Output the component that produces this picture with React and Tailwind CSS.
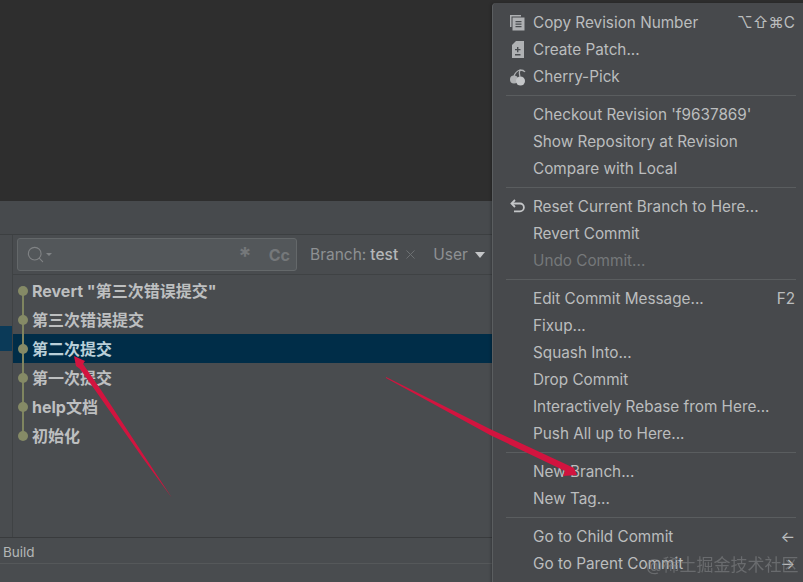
import { Search, X } from "lucide-react";

const font = "font-['Inter','Noto_Sans_CJK_SC',sans-serif]";

const commits = [
  { text: 'Revert "第三次错误提交"' },
  { text: "第三次错误提交" },
  { text: "第二次提交", selected: true },
  { text: "第一次提交" },
  { text: "help文档" },
  { text: "初始化" },
];

const menuGroups = [
  [
    { label: "Copy Revision Number", icon: "copy", hint: "⌥⇧⌘C" },
    { label: "Create Patch...", icon: "patch" },
    { label: "Cherry-Pick", icon: "cherry" },
  ],
  [
    { label: "Checkout Revision 'f9637869'" },
    { label: "Show Repository at Revision" },
    { label: "Compare with Local" },
  ],
  [
    { label: "Reset Current Branch to Here...", icon: "reset" },
    { label: "Revert Commit" },
    { label: "Undo Commit...", disabled: true },
  ],
  [
    { label: "Edit Commit Message...", hint: "F2" },
    { label: "Fixup..." },
    { label: "Squash Into..." },
    { label: "Drop Commit" },
    { label: "Interactively Rebase from Here..." },
    { label: "Push All up to Here..." },
  ],
  [{ label: "New Branch..." }, { label: "New Tag..." }],
  [
    { label: "Go to Child Commit", hint: "←" },
    { label: "Go to Parent Commit", hint: "→" },
  ],
];

function MenuIcon({ name }) {
  if (name === "copy") {
    return (
      <svg width="18" height="18" viewBox="0 0 18 18">
        <path d="M1 1h11v1.500H2.500V13H1z" fill="#afb1b3" />
        <path d="M3.500 3.500h12v13h-12z" fill="#afb1b3" />
        <path d="M6.500 7h6v1.300h-6zM6.500 9.500h6v1.300h-6zM6.500 12h6v1.300h-6z" fill="#4a4d50" />
      </svg>
    );
  }
  if (name === "patch") {
    return (
      <svg width="18" height="18" viewBox="0 0 18 18">
        <path d="M7 0h8v17H3V4z" fill="#afb1b3" />
        <path d="M8 6h1.400v2H11.500v1.300H9.400v2H8v-2H6V8h2zM6 13h5.500v1.400H6z" fill="#4a4d50" />
      </svg>
    );
  }
  if (name === "cherry") {
    return (
      <svg width="18" height="18" viewBox="0 0 18 18">
        <circle cx="5" cy="11.500" r="4" fill="#afb1b3" />
        <circle cx="11.500" cy="13" r="4.500" fill="#c4c6c8" />
        <path d="M5 8c1-3 3-5 6-6M11 9C10 6 10 4 11 2c2 0 4 .5 5 2" fill="none" stroke="#afb1b3" strokeWidth="1.300" />
      </svg>
    );
  }
  if (name === "reset") {
    return (
      <svg width="18" height="18" viewBox="0 0 18 18" fill="none" stroke="#c4c6c8" strokeWidth="1.800">
        <path d="M6 2 2.500 5.500 6 9" />
        <path d="M3 5.500h8a3.800 3.800 0 0 1 0 7.800H5" />
      </svg>
    );
  }
  return null;
}

function MenuItem({ item }) {
  return (
    <div className="flex h-[27px] items-center pl-[16px] pr-[9px]">
      <span className="flex w-[24px] shrink-0 items-center">
        {item.icon && <MenuIcon name={item.icon} />}
      </span>
      <span className={`pt-[2px] ${item.disabled ? "text-[#75787a]" : "text-[#bbbdbe]"}`}>{item.label}</span>
      {item.hint && <span className="ml-auto pt-[2px] text-[#bbbdbe]">{item.hint}</span>}
    </div>
  );
}

function CommitRow({ commit, first, last }) {
  return (
    <div className={`flex h-[29px] items-center ${commit.selected ? "bg-[#002d48]" : ""}`}>
      <div className="relative flex h-full w-[19px] shrink-0 justify-center pl-[1px]">
        <span
          className={`absolute left-[8.500px] w-[2px] bg-[#7f8560] ${first ? "top-1/2" : "top-0"} ${last ? "bottom-1/2" : "bottom-0"}`}
        />
        <span className="relative mt-[10px] h-[10px] w-[10px] rounded-full bg-[#858a66]" />
      </div>
      <span className={`text-[16px] font-bold ${commit.selected ? "text-[#b9cfd8]" : "text-[#bdbfc0]"}`}>
        {commit.text}
      </span>
    </div>
  );
}

export default function App() {
  return (
    <div className={`${font} relative flex h-[582px] w-[803px] flex-col overflow-hidden bg-[#494c4f]`}>
      <div className="h-[201px] shrink-0 bg-[#2e2e2e]" />
      <div className="h-[34px] shrink-0 border-b border-[#3c3f41] bg-[#474a4d]" />

      <div className="flex h-[303px] shrink-0 border-b border-[#393b3d]">
        <div className="w-[13px] shrink-0 border-r border-[#3f4244]">
          <div className="mt-[91px] h-[25px] bg-[#0b3a58]" />
        </div>
        <div className="w-[479px] shrink-0">
          <div className="flex h-[40px] items-center border-b border-[#3f4244] pl-[4px]">
            <div className="flex h-[33px] w-[280px] items-center rounded-[3px] border border-[#64686a] bg-[#53575a] pl-2 pr-[6px] text-[#808385]">
              <Search size={19} strokeWidth={1.4} />
              <span className="ml-[1px] h-0 w-0 border-x-[3px] border-t-[3px] border-x-transparent border-t-[#808385]" />
              <span className="ml-auto mr-[17px] pt-[4px] text-[24px] font-bold leading-none text-[#75787a]">*</span>
              <span className="text-[16px] font-bold text-[#75787a]">Cc</span>
            </div>
            <span className="ml-[13px] text-[15.500px] text-[#8e9193]">Branch:</span>
            <span className="ml-1 text-[15.500px] font-medium text-[#b5b7b8]">test</span>
            <X size={15} strokeWidth={1.5} className="ml-[5px] text-[#6f7274]" />
            <span className="ml-[15px] text-[15.500px] text-[#8e9193]">User</span>
            <span className="ml-[7px] h-0 w-0 border-x-[5px] border-t-[6px] border-x-transparent border-t-[#c4c6c8]" />
          </div>
          <div className="pt-[1px]">
            {commits.map((commit, i) => (
              <CommitRow key={commit.text} commit={commit} first={i === 0} last={i === commits.length - 1} />
            ))}
          </div>
        </div>
      </div>

      <div className="flex h-[26px] shrink-0 items-center border-b border-[#55585a] pl-[3px] pt-[3px] text-[13.500px] text-[#b4b6b7]">
        Build
      </div>

      <div className="absolute left-[492px] top-[3px] w-[320px] rounded-[4px] border-l border-[#5b5e60] bg-[#47494c] text-[15.300px] shadow-[-1px_0_3px_rgba(0,0,0,0.25)]">
        <div className="w-[311px] pb-[20px] pt-[6px]">
          {menuGroups.map((group, i) => (
            <div key={group.map((item) => item.label).join()}>
              {i > 0 && <div className="my-[5px] ml-[13px] mr-[8px] h-px bg-[#5a5d5f]" />}
              {group.map((item) => (
                <MenuItem key={item.label} item={item} />
              ))}
            </div>
          ))}
        </div>
      </div>

      {/* red annotation arrows */}
      <svg className="absolute left-0 top-0" width="803" height="582" viewBox="0 0 803 582">
        <polygon points="74,356 85,361 83,364 101,390 145,457 172,498 142,457 95,390 80,369 76,366" fill="#d2143f" />
        <polygon points="386,377 490,429 574,468 577,475 563,476 565,471 490,435 386,378" fill="#d2143f" />
      </svg>

      <div className="absolute left-[646px] top-[553px] text-[17px] text-[#8b8d8f]/50 blur-[0.4px]">@稀土掘金技术社区</div>
    </div>
  );
}
